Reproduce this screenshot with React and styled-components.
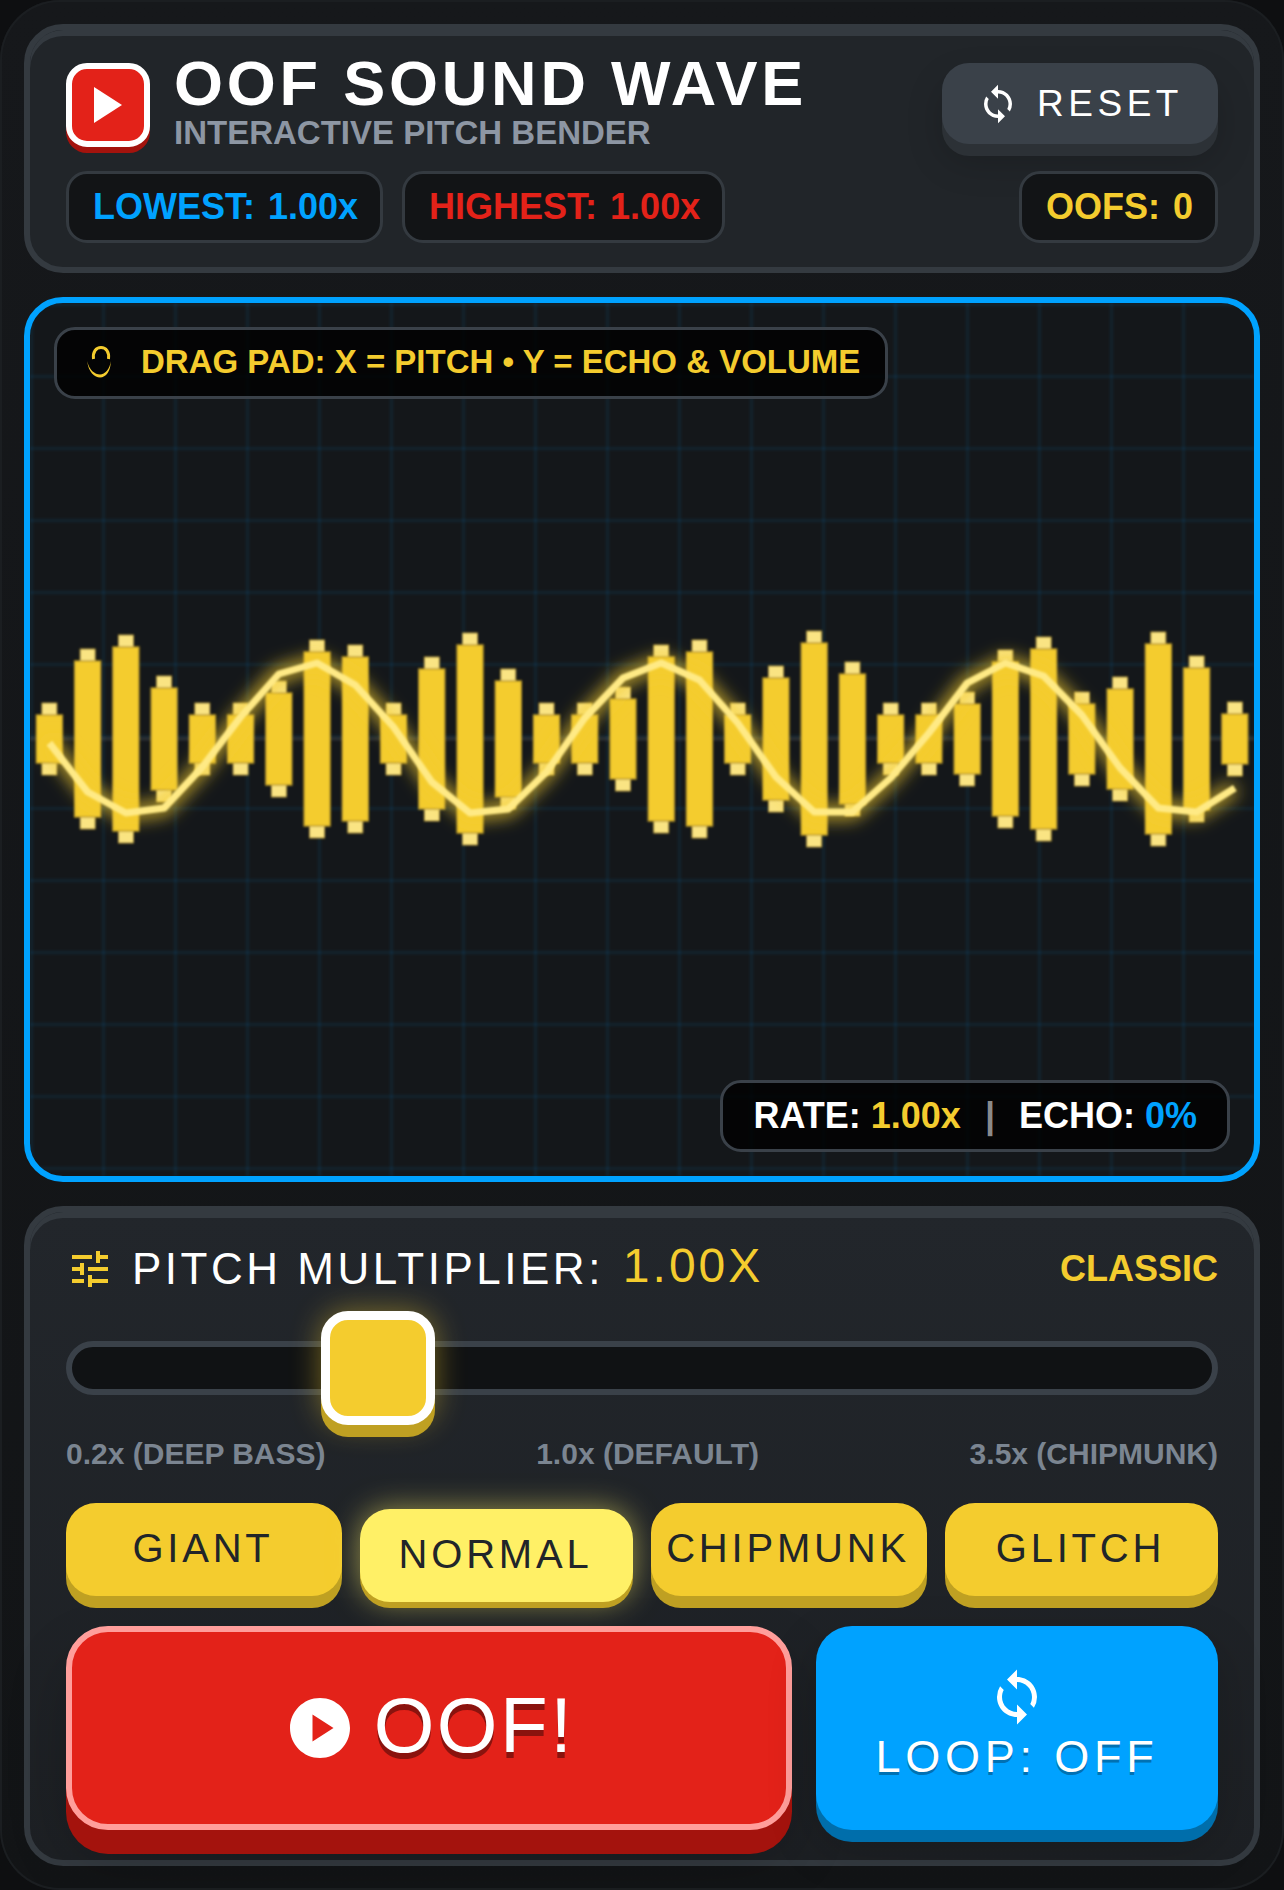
import React from "react";
import styled, { createGlobalStyle } from "styled-components";
import { MdSync, MdTune, MdPlayCircle } from "react-icons/md";

const YELLOW = "#f4cc2e";
const BLUE = "#00a2ff";
const RED = "#e32219";

const GlobalStyle = createGlobalStyle`
  * { box-sizing: border-box; }
  html, body {
    margin: 0;
    padding: 0;
    background: #0e0f11;
    font-family: "Liberation Sans", Arial, sans-serif;
  }
`;

const Shell = styled.div`
  width: 1284px;
  height: 1890px;
  padding: 24px;
  display: flex;
  flex-direction: column;
  gap: 24px;
  border-radius: 60px;
  background: linear-gradient(180deg, #16181b 0%, #121416 100%);
  box-shadow: inset 0 0 0 2px #1b1e21;
`;

const Panel = styled.section`
  border: 6px solid #343a40;
  border-radius: 39px;
  background: #212529;
  box-shadow: inset 0 6px 0 #343a40;
`;

const HeaderPanel = styled(Panel)`
  height: 249px;
  padding: 33px 36px 0;
`;

const HeaderRow = styled.div`
  display: flex;
  justify-content: space-between;
  align-items: flex-start;
  height: 84px;
`;

const Brand = styled.div`
  display: flex;
  gap: 24px;
`;

const LogoBadge = styled.div`
  width: 84px;
  height: 84px;
  flex: none;
  display: flex;
  align-items: center;
  justify-content: center;
  background: ${RED};
  border: 6px solid #fff;
  border-radius: 21px;
  box-shadow: 0 6px 0 #a4130d;
`;

const LogoPlay = styled.div`
  width: 0;
  height: 0;
  border-style: solid;
  border-width: 18px 0 18px 28px;
  border-color: transparent transparent transparent #fff;
`;

const Title = styled.h1`
  margin: -11px 0 0;
  font-size: 63px;
  line-height: 62px;
  font-weight: 700;
  letter-spacing: 3.8px;
  color: #fff;
  white-space: nowrap;
`;

const Subtitle = styled.div`
  margin-top: 2px;
  font-size: 33px;
  line-height: 33px;
  font-weight: 700;
  color: #8d96a3;
  white-space: nowrap;
`;

const ResetButton = styled.button`
  width: 276px;
  height: 81px;
  display: flex;
  align-items: center;
  justify-content: center;
  gap: 18px;
  border: 0;
  border-radius: 27px;
  background: #3a4149;
  color: #fff;
  font: 400 37px "Liberation Sans", Arial, sans-serif;
  letter-spacing: 4.5px;
  box-shadow: 0 12px 0 #2c3136, 0 18px 36px rgba(0, 0, 0, 0.18);
`;

const StatsRow = styled.div`
  display: flex;
  gap: 19px;
  margin-top: 24px;
`;

const StatPill = styled.div`
  height: 72px;
  padding: 0 22px 0 24px;
  display: flex;
  align-items: center;
  border: 3px solid #343a40;
  border-radius: 21px;
  background: #121416;
  color: ${(p) => p.$color};
  font-size: 36px;
  font-weight: 700;
  word-spacing: 3px;
  white-space: nowrap;
  margin-left: ${(p) => (p.$push ? "auto" : "0")};
`;

const Pad = styled.section`
  position: relative;
  height: 885px;
  border: 6px solid ${BLUE};
  border-radius: 39px;
  background: #14171a;
  overflow: hidden;
`;

const WaveSvg = styled.svg`
  position: absolute;
  left: 0;
  top: 0;
  display: block;
`;

const OverlayPill = styled.div`
  position: absolute;
  height: 72px;
  display: flex;
  align-items: center;
  border: 3px solid #3a4149;
  border-radius: 21px;
  background: rgba(0, 0, 0, 0.8);
  font-weight: 700;
  white-space: nowrap;
`;

const DragHint = styled(OverlayPill)`
  left: 24px;
  top: 24px;
  padding: 0 25px 2px 30px;
  gap: 30px;
  font-size: 33px;
  color: ${YELLOW};
`;

const RateReadout = styled(OverlayPill)`
  right: 24px;
  bottom: 24px;
  padding: 0 30px;
  font-size: 36px;
  color: #fff;
`;

const Tint = styled.span`
  color: ${(p) => p.$color};
`;

const Divider = styled.span`
  margin: 0 24px;
  color: #8a8a8a;
`;

const ControlsPanel = styled(Panel)`
  flex: 1;
  padding: 33px 36px 0;
  background: linear-gradient(180deg, #22262b 0%, #1d2024 100%);
`;

const ControlsHead = styled.div`
  height: 48px;
  display: flex;
  align-items: center;
  color: #fff;
`;

const TuneIcon = styled(MdTune)`
  flex: none;
  color: ${YELLOW};
  margin-right: 18px;
`;

const PitchLabel = styled.span`
  font-size: 44px;
  letter-spacing: 3.5px;
  white-space: nowrap;
`;

const PitchValue = styled.span`
  margin-left: 19px;
  margin-top: -8px;
  font-size: 48px;
  letter-spacing: 3px;
  color: ${YELLOW};
`;

const ModeName = styled.span`
  margin-left: auto;
  font-size: 36px;
  font-weight: 700;
  color: ${YELLOW};
`;

const Track = styled.div`
  position: relative;
  height: 54px;
  margin-top: 48px;
  border: 6px solid #3a4149;
  border-radius: 27px;
  background: #101214;
`;

const Thumb = styled.div`
  position: absolute;
  top: -36px;
  width: 114px;
  height: 114px;
  border: 9px solid #fff;
  border-radius: 27px;
  background: ${YELLOW};
  box-shadow: 0 12px 0 #bfa022, 0 0 30px rgba(244, 204, 46, 0.45);
`;

const RangeLabels = styled.div`
  display: flex;
  justify-content: space-between;
  margin-top: 41px;
  font-size: 30px;
  line-height: 36px;
  font-weight: 700;
  color: #7b8591;
`;

const Presets = styled.div`
  display: grid;
  grid-template-columns: 276fr 273fr 276fr 273fr;
  gap: 18px;
  margin-top: 31px;
`;

const PresetButton = styled.button`
  height: 93px;
  padding: 0 2px 2px 0;
  border: 0;
  border-radius: 30px;
  font: 400 40px "Liberation Sans", Arial, sans-serif;
  letter-spacing: 3.8px;
  color: #212529;
  background: ${(p) => (p.$active ? "#fff066" : YELLOW)};
  transform: translateY(${(p) => (p.$active ? "6px" : "0")});
  box-shadow: ${(p) =>
    p.$active
      ? "0 6px 0 #bfa022, 0 0 30px rgba(255, 240, 102, 0.55)"
      : "0 12px 0 #bfa022"};
`;

const ActionRow = styled.div`
  display: grid;
  grid-template-columns: 726px 1fr;
  gap: 24px;
  margin-top: 30px;
`;

const OofButton = styled.button`
  height: 204px;
  display: flex;
  align-items: center;
  justify-content: center;
  gap: 18px;
  border: 6px solid #ff9e9b;
  border-radius: 42px;
  background: ${RED};
  color: #fff;
  font: 400 78px "Liberation Sans", Arial, sans-serif;
  letter-spacing: 2.5px;
  text-shadow: 0 6px 0 #8a130e;
  box-shadow: 0 24px 0 #a4130d, 0 30px 60px rgba(0, 0, 0, 0.2);
`;

const OofLabel = styled.span`
  margin-bottom: 6px;
`;

const LoopButton = styled.button`
  height: 204px;
  display: flex;
  flex-direction: column;
  align-items: center;
  justify-content: center;
  gap: 4px;
  padding: 0 0 6px;
  border: 0;
  border-radius: 36px;
  background: ${BLUE};
  color: #fff;
  font: 400 45px "Liberation Sans", Arial, sans-serif;
  letter-spacing: 4.8px;
  text-shadow: 0 3px 0 #0071b3;
  box-shadow: 0 12px 0 #006eab, 0 18px 50px rgba(0, 0, 0, 0.2);
`;

// half heights of the wave bars, in px, left to right
const BAR_HEIGHTS = [
  24, 78, 92, 51, 24, 24, 46, 87, 82, 24, 70, 94, 58, 24, 24, 40, 82, 87, 24,
  61, 96, 65, 24, 24, 35, 77, 90, 35, 50, 95, 71, 25,
];

// y of the pitch trace at each bar
const TRACE_Y = [
  743, 792, 813, 808, 767, 717, 674, 663, 685, 727, 782, 813, 809, 772, 718,
  678, 663, 680, 723, 777, 812, 812, 778, 733, 683, 663, 676, 715, 768, 808,
  812, 788,
];

const PAD_W = 1224;
const PAD_H = 873;
const MID_Y = 436;
const STEP = 38.24;
const barX = (i) => 19.4 + i * STEP;

const WaveDisplay = () => {
  const trace = TRACE_Y.map((y, i) => `${barX(i)},${y - 303}`).join(" ");
  return (
    <WaveSvg width={PAD_W} height={PAD_H} viewBox={`0 0 ${PAD_W} ${PAD_H}`}>
      <defs>
        <filter id="soft" x="-5%" y="-5%" width="110%" height="110%">
          <feGaussianBlur stdDeviation="1.1" />
        </filter>
        <filter id="glow" x="-5%" y="-20%" width="110%" height="140%">
          <feGaussianBlur stdDeviation="9" />
        </filter>
      </defs>
      <g filter="url(#soft)" stroke="rgba(0,162,255,0.075)" strokeWidth="3.5">
        {Array.from({ length: 18 }, (_, k) => (
          <line key={k} x1={72 * k + 1.5} x2={72 * k + 1.5} y1="0" y2={PAD_H} />
        ))}
        {Array.from({ length: 13 }, (_, k) => (
          <line key={k} y1={72 * k + 1.5} y2={72 * k + 1.5} x1="0" x2={PAD_W} />
        ))}
        <line
          x1="0"
          x2={PAD_W}
          y1={MID_Y}
          y2={MID_Y}
          stroke="rgba(255,255,255,0.09)"
        />
      </g>
      <g filter="url(#soft)">
        {BAR_HEIGHTS.map((h, i) => (
          <g key={i}>
            <rect
              x={barX(i) - 7.5}
              y={MID_Y - h - 12}
              width="15"
              height={2 * h + 24}
              fill="#fae483"
              stroke="#b8972a"
              strokeWidth="0.8"
            />
            <rect
              x={barX(i) - 13}
              y={MID_Y - h}
              width="26"
              height={2 * h}
              fill={YELLOW}
              stroke="#b8972a"
              strokeWidth="1.4"
            />
          </g>
        ))}
      </g>
      <polyline
        points={trace}
        fill="none"
        stroke={YELLOW}
        strokeOpacity="0.9"
        strokeWidth="13"
        filter="url(#glow)"
      />
      <polyline
        points={trace}
        fill="none"
        stroke="#ffea85"
        strokeWidth="7"
        strokeLinejoin="round"
        filter="url(#soft)"
      />
    </WaveSvg>
  );
};

// small touch glyph in the pad hint
const TouchGlyph = () => (
  <svg width="24" height="32" viewBox="0 0 24 32" fill="none">
    <path
      d="M6.5 13C5.5 6 9 1.5 14 1.5C19 1.5 22.5 6 21.5 13"
      stroke={YELLOW}
      strokeWidth="3"
    />
    <path
      d="M0.3 15C1 26 8 31.5 13 31.5C19 31.5 24 25 23.7 15C23 23 18 28.5 13 28.5C8 28.5 2 24 0.3 15Z"
      fill={YELLOW}
    />
  </svg>
);

const PITCH_MIN = 0.2;
const PITCH_MAX = 3.5;

export default function App() {
  const pitch = 1;
  const ratio = (pitch - PITCH_MIN) / (PITCH_MAX - PITCH_MIN);

  return (
    <>
      <GlobalStyle />
      <Shell>
        <HeaderPanel>
          <HeaderRow>
            <Brand>
              <LogoBadge>
                <LogoPlay />
              </LogoBadge>
              <div>
                <Title>OOF SOUND WAVE</Title>
                <Subtitle>INTERACTIVE PITCH BENDER</Subtitle>
              </div>
            </Brand>
            <ResetButton>
              <MdSync size={42} />
              RESET
            </ResetButton>
          </HeaderRow>
          <StatsRow>
            <StatPill $color={BLUE}>LOWEST: 1.00x</StatPill>
            <StatPill $color={RED}>HIGHEST: 1.00x</StatPill>
            <StatPill $color={YELLOW} $push>
              OOFS: 0
            </StatPill>
          </StatsRow>
        </HeaderPanel>

        <Pad>
          <WaveDisplay />
          <DragHint>
            <TouchGlyph />
            DRAG PAD: X = PITCH • Y = ECHO &amp; VOLUME
          </DragHint>
          <RateReadout>
            RATE:&nbsp;<Tint $color={YELLOW}>1.00x</Tint>
            <Divider>|</Divider>
            ECHO:&nbsp;<Tint $color={BLUE}>0%</Tint>
          </RateReadout>
        </Pad>

        <ControlsPanel>
          <ControlsHead>
            <TuneIcon size={48} />
            <PitchLabel>PITCH MULTIPLIER:</PitchLabel>
            <PitchValue>1.00X</PitchValue>
            <ModeName>CLASSIC</ModeName>
          </ControlsHead>
          <Track>
            <Thumb style={{ left: `calc((100% - 114px) * ${ratio})` }} />
          </Track>
          <RangeLabels>
            <span>0.2x (DEEP BASS)</span>
            <span>1.0x (DEFAULT)</span>
            <span>3.5x (CHIPMUNK)</span>
          </RangeLabels>
          <Presets>
            <PresetButton>GIANT</PresetButton>
            <PresetButton $active>NORMAL</PresetButton>
            <PresetButton>CHIPMUNK</PresetButton>
            <PresetButton>GLITCH</PresetButton>
          </Presets>
          <ActionRow>
            <OofButton>
              <MdPlayCircle size={72} />
              <OofLabel>OOF!</OofLabel>
            </OofButton>
            <LoopButton>
              <MdSync size={60} />
              LOOP: OFF
            </LoopButton>
          </ActionRow>
        </ControlsPanel>
      </Shell>
    </>
  );
}
